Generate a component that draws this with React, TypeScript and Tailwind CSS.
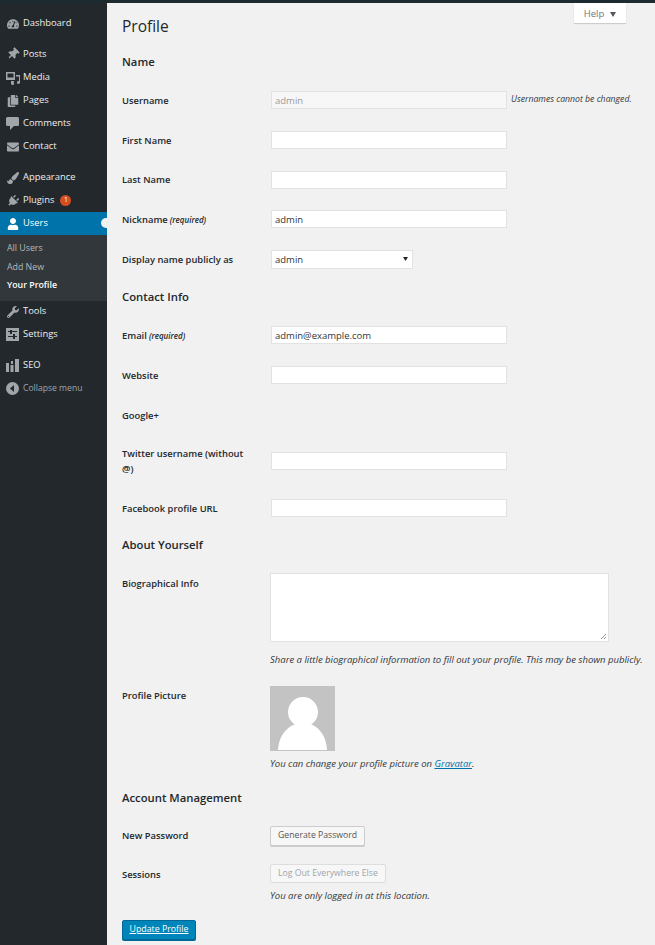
import type { ReactNode } from "react";
import {
  FaCopy,
  FaEnvelope,
  FaPaintBrush,
  FaPlug,
  FaTachometerAlt,
  FaThumbtack,
  FaUser,
  FaWrench,
} from "react-icons/fa";

function MediaIcon() {
  return (
    <svg width="14" height="14" viewBox="0 0 14 14" fill="currentColor">
      <path d="M0 1h9v8H0Zm1.5 1.5v4h6v-4Z" fillRule="evenodd" />
      <path d="M10 4h4v7.5a1.5 1.5 0 1 1-1-1.4V5.5h-3ZM6 11a1.5 1.5 0 1 1-1 1.4V10h3v1Z" />
    </svg>
  );
}

function CommentIcon() {
  return (
    <svg width="13" height="13" viewBox="0 0 13 13" fill="currentColor">
      <path d="M1.5 0h10A1.5 1.5 0 0 1 13 1.5v6A1.5 1.5 0 0 1 11.5 9H8l-4 4V9H1.500A1.500 1.500 0 0 1 0 7.500v-6A1.500 1.500 0 0 1 1.500 0Z" />
    </svg>
  );
}

function SettingsIcon() {
  return (
    <svg width="13" height="13" viewBox="0 0 13 13" fill="currentColor">
      <path d="M0 0h13v13H0Zm2 3v1h2v2h2V4h5V3H6V2H4v1Zm0 5v1h5v2h2V9h2V8H9V6H7v2Z" fillRule="evenodd" />
    </svg>
  );
}

function SeoIcon() {
  return (
    <svg width="13" height="15" viewBox="0 0 13 15" fill="currentColor">
      <path d="M0 5h3v9H0ZM4.500 7h3v7h-3ZM9 1h4v13H9Z" />
      <path d="M5 3h2v3H5Z" />
    </svg>
  );
}

function CollapseIcon() {
  return (
    <svg width="13" height="13" viewBox="0 0 13 13" fill="currentColor">
      <path d="M6.500 0a6.500 6.500 0 1 1 0 13 6.500 6.500 0 0 1 0-13ZM8 3 4 6.500 8 10Z" fillRule="evenodd" />
    </svg>
  );
}

function MenuItem({ icon, label, active, badge, muted, className = "h-[23px]" }: { icon: ReactNode; label: string; active?: boolean; badge?: boolean; muted?: boolean; className?: string }) {
  return (
    <div className={`relative flex items-center gap-[3px] pl-[5px] ${className} ${active ? "bg-[#0073aa] text-white" : muted ? "text-[#a0a5aa]" : "text-[#eeeeee]"}`}>
      <span className={`flex w-[15px] justify-center text-[12px] ${active ? "text-white" : "text-[#a0a5aa]"}`}>{icon}</span>
      <span className={badge ? "mr-[3px]" : ""}>{label}</span>
      {badge && (
        <span className="flex h-[11px] w-[11px] items-center justify-center rounded-full bg-[#d54e21] text-[7px] text-white">1</span>
      )}
      {active && <span className="absolute right-[-1px] top-[6px] h-[10px] w-[7px] rounded-l-full bg-[#f1f1f1]" />}
    </div>
  );
}

function Sidebar() {
  return (
    <aside className="w-[107px] shrink-0 bg-[#23282d] pt-[12px] text-[9.4px] font-['Open_Sans',sans-serif]">
      <MenuItem icon={<FaTachometerAlt />} label="Dashboard" />
      <div className="mt-[7px]">
        <MenuItem icon={<FaThumbtack className="rotate-45" />} label="Posts" className="h-[24px]" />
        <MenuItem icon={<MediaIcon />} label="Media" />
        <MenuItem icon={<FaCopy />} label="Pages" />
        <MenuItem icon={<CommentIcon />} label="Comments" />
        <MenuItem icon={<FaEnvelope />} label="Contact" />
      </div>
      <div className="mt-[8px]">
        <MenuItem icon={<FaPaintBrush />} label="Appearance" />
        <MenuItem icon={<FaPlug className="rotate-45" />} label="Plugins" badge />
        <MenuItem icon={<FaUser />} label="Users" active />
      </div>
      <div className="flex h-[66px] flex-col justify-center gap-[2.5px] bg-[#32373c] pb-[3px] pl-[7px] text-[8.8px] text-[#b4b9be]">
        <div className="h-[16px] leading-[16px]">All Users</div>
        <div className="h-[16px] leading-[16px]">Add New</div>
        <div className="h-[16px] font-semibold leading-[16px] text-white">Your Profile</div>
      </div>
      <MenuItem icon={<FaWrench />} label="Tools" className="h-[21px]" />
      <MenuItem icon={<SettingsIcon />} label="Settings" className="h-[24px]" />
      <div className="mt-[8px]">
        <MenuItem icon={<SeoIcon />} label="SEO" />
        <MenuItem icon={<CollapseIcon />} label="Collapse menu" muted className="h-[23px] text-[8.6px]" />
      </div>
    </aside>
  );
}

function Row({ label, hint, className, children }: { label: ReactNode; hint?: string; className: string; children?: ReactNode }) {
  return (
    <div className={`flex items-center ${className}`}>
      <div className="w-[149px] shrink-0 pr-[20px] text-[9.4px] font-semibold leading-[15px] text-[#23282d]">
        {label}
        {hint && <em className="text-[8px]"> {hint}</em>}
      </div>
      {children}
    </div>
  );
}

function Field({ value = "", disabled }: { value?: string; disabled?: boolean }) {
  return (
    <input
      readOnly
      value={value}
      className={`h-[18px] w-[236px] border border-[#e2e2e2] px-[3px] text-[9.5px] outline-none ${disabled ? "bg-[#f7f7f7] text-[#9a9a9a]" : "bg-white text-[#32373c]"}`}
    />
  );
}

function Heading({ children, className }: { children: ReactNode; className: string }) {
  return <h2 className={`flex items-center text-[11.3px] font-semibold text-[#23282d] ${className}`}>{children}</h2>;
}

export default function App() {
  return (
    <div className="flex h-[945px] w-[655px] overflow-hidden bg-[#f1f1f1] font-['Open_Sans',sans-serif]">
      <Sidebar />
      <main className="relative min-w-0 flex-1 px-[15px] pt-[3px]">
        <div className="absolute right-[29px] top-[3px] flex h-[20px] w-[52px] items-center justify-center gap-[6px] bg-white pt-[2px] text-[9.5px] text-[#72777c] shadow-[0_1px_1px_rgba(0,0,0,0.15)]">
          Help
          <svg width="6" height="5" viewBox="0 0 6 5">
            <path d="M0 0h6L3 5Z" fill="#50575e" />
          </svg>
        </div>

        <h1 className="flex h-[37px] items-center pt-[10px] text-[15.5px] text-[#23282d]">Profile</h1>
        <Heading className="mt-[10px] h-[22px] pt-[2px]">Name</Heading>

        <Row label="Username" className="mt-[8px] h-[40px]">
          <Field value="admin" disabled />
          <em className="ml-[4px] whitespace-nowrap text-[8.7px] text-[#32373c]">Usernames cannot be changed.</em>
        </Row>
        <Row label="First Name" className="h-[40px]"><Field /></Row>
        <Row label="Last Name" className="h-[39px]"><Field /></Row>
        <Row label="Nickname" hint="(required)" className="h-[40px]"><Field value="admin" /></Row>
        <Row label="Display name publicly as" className="h-[41px]">
          <div className="relative h-[19px]">
            <select className="block h-[19px] w-[142px] appearance-none border border-[#e2e2e2] bg-white px-[3px] pt-[2px] text-[9.5px] text-[#32373c] outline-none">
              <option>admin</option>
            </select>
            <svg className="absolute right-[5px] top-[7px]" width="5" height="4" viewBox="0 0 5 4">
              <path d="M0 0h5L2.500 4Z" fill="#23282d" />
            </svg>
          </div>
        </Row>

        <Heading className="h-[35px]">Contact Info</Heading>
        <Row label="Email" hint="(required)" className="h-[40px]"><Field value="admin@example.com" /></Row>
        <Row label="Website" className="h-[40px]"><Field /></Row>
        <Row label="Google+" className="h-[40px]" />
        <Row label="Twitter username (without @)" className="h-[52px]"><Field /></Row>
        <Row label="Facebook profile URL" className="h-[42px]"><Field /></Row>

        <Heading className="h-[32px]">About Yourself</Heading>
        <div className="mt-[12px] flex items-start">
          <div className="w-[148px] shrink-0 pt-[3px] text-[9.4px] font-semibold leading-[15px] text-[#23282d]">Biographical Info</div>
          <div>
            <div className="relative h-[69px] w-[339px] border border-[#e2e2e2] bg-white">
              <svg className="absolute bottom-[1px] right-[1px]" width="7" height="7" viewBox="0 0 7 7">
                <path d="M1 6 6 1M4 6 6 4" stroke="#777" strokeWidth="0.8" />
              </svg>
            </div>
            <p className="mt-[10px] whitespace-nowrap text-[9.5px] italic leading-[15px] text-[#32373c]">
              Share a little biographical information to fill out your profile. This may be shown publicly.
            </p>
          </div>
        </div>

        <div className="mt-[19px] flex items-start">
          <div className="w-[148px] shrink-0 pt-[2px] text-[9.4px] font-semibold leading-[15px] text-[#23282d]">Profile Picture</div>
          <div>
            <svg className="block" width="65" height="65" viewBox="0 0 65 65">
              <rect width="65" height="65" fill="#c3c3c3" />
              <circle cx="33" cy="26" r="15" fill="#ffffff" />
              <path d="M8 64C9 47 20 37 33 37s23 10 24 27Z" fill="#ffffff" />
            </svg>
            <p className="mt-[5px] text-[9.5px] italic leading-[15px] text-[#32373c]">
              You can change your profile picture on <a className="text-[#0073aa] underline">Gravatar</a>.
            </p>
          </div>
        </div>

        <Heading className="mt-[17px] h-[20px]">Account Management</Heading>
        <Row label="New Password" className="mt-[8px] h-[39px]">
          <button className="-ml-[1px] h-[20px] rounded-[2px] border border-[#cccccc] bg-[#f7f7f7] px-[7px] text-[8.7px] text-[#555555] shadow-[0_1px_0_#cccccc]">
            Generate Password
          </button>
        </Row>
        <div className="mt-[9px] flex items-start">
          <div className="w-[148px] shrink-0 pt-[3px] text-[9.4px] font-semibold leading-[15px] text-[#23282d]">Sessions</div>
          <div>
            <button className="block h-[19px] rounded-[2px] border border-[#dddddd] bg-[#f7f7f7] px-[7px] text-[8.7px] text-[#a0a5aa]">
              Log Out Everywhere Else
            </button>
            <p className="mt-[5px] text-[9.5px] italic leading-[15px] text-[#32373c]">You are only logged in at this location.</p>
          </div>
        </div>

        <button className="mt-[17px] block h-[20px] w-[74px] rounded-[2px] border border-[#006799] bg-[#0085ba] text-[8.8px] text-white underline shadow-[0_1px_0_#006799]">
          Update Profile
        </button>
      </main>
      <div className="absolute left-0 top-0 h-[3px] w-[655px] bg-[#1d2a30]" />
    </div>
  );
}
